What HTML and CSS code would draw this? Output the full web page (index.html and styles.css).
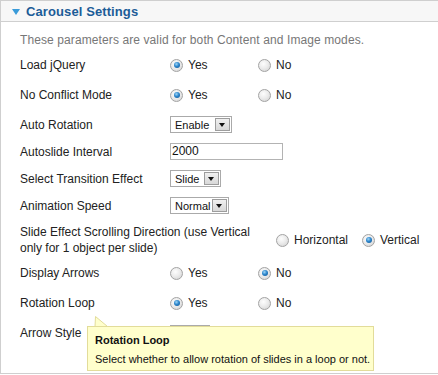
FILE: index.html
```html
<!DOCTYPE html>
<html>
<head>
    <title>Carousel Settings</title>
    <meta charset="UTF-8">
    <link rel="stylesheet" href="styles.css">
</head>
<body>
    <div class="panel">
        <div class="panel-head">
            <span class="toggle"></span>
            <h3 class="panel-title">Carousel Settings</h3>
        </div>
        <div class="panel-body">
            <p class="note">These parameters are valid for both Content and Image modes.</p>

            <div class="param param-radio">
                <label class="key">Load jQuery</label>
                <div class="value">
                    <span class="opt"><span class="radio on"></span>Yes</span>
                    <span class="opt"><span class="radio"></span>No</span>
                </div>
            </div>

            <div class="param param-radio">
                <label class="key">No Conflict Mode</label>
                <div class="value">
                    <span class="opt"><span class="radio on"></span>Yes</span>
                    <span class="opt"><span class="radio"></span>No</span>
                </div>
            </div>

            <div class="param param-field">
                <label class="key">Auto Rotation</label>
                <div class="value">
                    <span class="select select-enable">Enable<span class="select-btn"></span></span>
                </div>
            </div>

            <div class="param param-field">
                <label class="key">Autoslide Interval</label>
                <div class="value">
                    <span class="text-input">2000</span>
                </div>
            </div>

            <div class="param param-field">
                <label class="key">Select Transition Effect</label>
                <div class="value">
                    <span class="select select-slide">Slide<span class="select-btn"></span></span>
                </div>
            </div>

            <div class="param param-field">
                <label class="key">Animation Speed</label>
                <div class="value">
                    <span class="select select-speed">Normal<span class="select-btn"></span></span>
                </div>
            </div>

            <div class="param param-wide">
                <label class="key key-wide">Slide Effect Scrolling Direction (use Vertical only for 1 object per slide)</label>
                <div class="value">
                    <span class="opt opt-dir"><span class="radio"></span>Horizontal</span>
                    <span class="opt opt-dir"><span class="radio on"></span>Vertical</span>
                </div>
            </div>

            <div class="param param-radio">
                <label class="key">Display Arrows</label>
                <div class="value">
                    <span class="opt"><span class="radio"></span>Yes</span>
                    <span class="opt"><span class="radio on"></span>No</span>
                </div>
            </div>

            <div class="param param-radio">
                <label class="key">Rotation Loop</label>
                <div class="value">
                    <span class="opt"><span class="radio on"></span>Yes</span>
                    <span class="opt"><span class="radio"></span>No</span>
                </div>
            </div>

            <div class="param param-radio">
                <label class="key">Arrow Style</label>
                <div class="value">
                    <span class="select select-arrow"><span class="select-btn"></span></span>
                </div>
            </div>
        </div>

        <div class="tooltip">
            <svg class="tooltip-tip" width="15" height="11" viewBox="0 0 15 11">
                <polygon points="1.5,0.5 1,10.5 13.5,10.5" fill="#ffffcc" stroke="#e2dc9a" stroke-width="1"/>
            </svg>
            <div class="tooltip-title">Rotation Loop</div>
            <div class="tooltip-text">Select whether to allow rotation of slides in a loop or not.</div>
        </div>
    </div>
</body>
</html>
```

FILE: styles.css
```css
body {
    margin: 0;
    background: #fff;
    font-family: "Liberation Sans", Arial, sans-serif;
    font-size: 12px;
    color: #222;
}
.panel {
    position: relative;
    height: 374px;
    box-sizing: border-box;
    border-left: 1px solid #cfcfcf;
    border-top: 1px solid #cfcfcf;
    border-bottom: 1px solid #cfcfcf;
    overflow: hidden;
}
.panel-head {
    display: flex;
    align-items: center;
    height: 20px;
    background: #f7f7f7;
    border-bottom: 1px solid #cfcfcf;
    padding-left: 11px;
}
.toggle {
    width: 0;
    height: 0;
    border-left: 4px solid transparent;
    border-right: 4px solid transparent;
    border-top: 6px solid #3a9bd9;
    margin-right: 6px;
    margin-top: 1px;
}
.panel-title {
    margin: 0;
    font-size: 13px;
    font-weight: bold;
    color: #1c5c97;
    letter-spacing: 0.1px;
}
.panel-body {
    padding: 10px 0 0 19px;
}
.note {
    margin: 0 0 2px;
    line-height: 16px;
    color: #777;
    letter-spacing: 0.1px;
}
.param {
    display: flex;
    align-items: center;
    box-sizing: border-box;
}
.param-radio { height: 30px; }
.param-field { height: 27px; }
.param-radio + .param-field { margin-top: 1px; }
.param-wide {
    padding: 5px 0 2px;
}
.key {
    width: 150px;
    flex-shrink: 0;
    line-height: 16px;
}
.key-wide {
    width: 250px;
    padding-right: 6px;
}
.value {
    display: flex;
    align-items: center;
}
.opt {
    display: inline-flex;
    align-items: center;
    gap: 5px;
    width: 88px;
}
.opt-dir { width: 86px; }
.radio {
    position: relative;
    width: 13px;
    height: 13px;
    box-sizing: border-box;
    border-radius: 50%;
    border: 1px solid #a3a3a3;
    background: radial-gradient(circle at 40% 35%, #fdfdfd 0, #ececec 45%, #cfcfcf 100%);
    flex-shrink: 0;
}
.radio.on::after {
    content: "";
    position: absolute;
    left: 2.5px;
    top: 2.5px;
    width: 6px;
    height: 6px;
    border-radius: 50%;
    background: radial-gradient(circle at 40% 35%, #9fd6f7 0, #2c86cc 45%, #0e4f8c 100%);
}
.select {
    display: inline-flex;
    align-items: center;
    box-sizing: border-box;
    height: 17px;
    padding-left: 4px;
    border: 1px solid #aaa;
    background: #fff;
    font-size: 11px;
    color: #111;
}
.select-enable { width: 62px; }
.select-slide { width: 51px; }
.select-speed { width: 59px; }
.select-arrow { width: 40px; }
.select-btn {
    position: relative;
    margin-left: auto;
    margin-right: 1px;
    width: 15px;
    height: 13px;
    box-sizing: border-box;
    border: 1px solid #9d9d9d;
    background: linear-gradient(#f0f0f0, #d8d8d8);
}
.select-btn::after {
    content: "";
    position: absolute;
    left: 3px;
    top: 4px;
    border-left: 3.5px solid transparent;
    border-right: 3.5px solid transparent;
    border-top: 4px solid #111;
}
.text-input {
    display: inline-block;
    box-sizing: border-box;
    width: 113px;
    height: 17px;
    padding-left: 1px;
    line-height: 15px;
    border: 1px solid #b3b3b3;
    color: #111;
}
.tooltip {
    position: absolute;
    left: 86px;
    top: 325px;
    width: 287px;
    height: 45px;
    box-sizing: border-box;
    padding: 6px 0 0 7px;
    background: #ffffcc;
    border: 1px solid #e2dc9a;
    color: #111;
    font-size: 11px;
    white-space: nowrap;
}
.tooltip-tip {
    position: absolute;
    left: 6px;
    top: -11px;
}
.tooltip-title {
    font-weight: bold;
    line-height: 15px;
    margin-bottom: 4px;
}
.tooltip-text {
    line-height: 15px;
}
```
